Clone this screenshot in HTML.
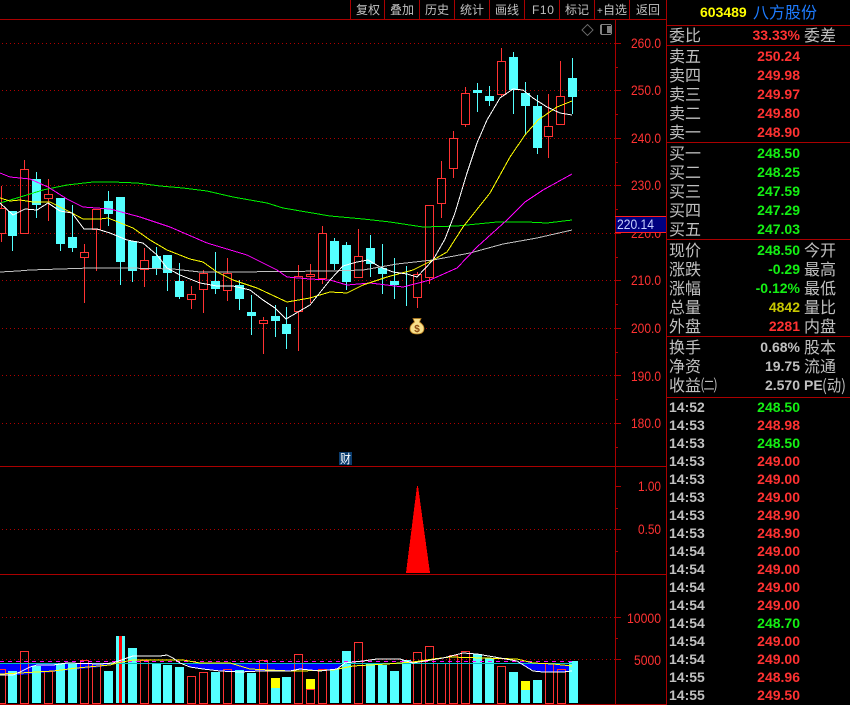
<!DOCTYPE html>
<html><head><meta charset="utf-8"><title>603489</title>
<style>
html,body{margin:0;padding:0;background:#000;width:850px;height:705px;overflow:hidden}
svg{display:block;position:absolute;left:0;top:0}
text{font-family:"Liberation Sans","WenQuanYi Zen Hei","Noto Sans CJK SC",sans-serif}
.c{font-family:"WenQuanYi Zen Hei","Noto Sans CJK SC",sans-serif;font-size:16px;fill:#c0c0c0}
.t{font-family:"WenQuanYi Zen Hei","Noto Sans CJK SC",sans-serif;font-size:12px;fill:#c0c0c0}
.n{font-weight:bold;font-size:14px;text-anchor:end}
.a{font-size:14px;fill:#ff3232}
.r{fill:#ff3232}.g{fill:#14f014}.w{fill:#c0c0c0}.y{fill:#c8c800}
.h{font-weight:bold;font-size:14px;fill:#c0c0c0}
</style></head><body>
<svg width="850" height="705" viewBox="0 0 850 705" xmlns="http://www.w3.org/2000/svg">
<rect width="850" height="705" fill="#000"/>
<g shape-rendering="crispEdges">
<!-- grid -->
<g stroke="#b00000" stroke-dasharray="1 3" fill="none">
<path d="M2 43.5H615M2 90.5H615M2 138.5H615M2 185.5H615M2 233.5H615M2 280.5H615M2 328.5H615M2 375.5H615M2 423.5H615M2 529.5H615M2 617.5H615M2 659.5H615"/>
</g>
<!-- frame -->
<g stroke="#aa0000" fill="none">
<path d="M0 19.5H666M0 466.5H666M0 574.5H666M0 704.5H666M615.5 19V705M666.5 0V705"/>
<path d="M350.5 0V19M384.5 0V19M419.5 0V19M454.5 0V19M489.5 0V19M524.5 0V19M559.5 0V19M594.5 0V19M629.5 0V19"/>
<path d="M666 25.5H850M666 45.5H850M666 142.5H850M666 239.5H850M666 336.5H850M666 397.5H850"/>
<path d="M615 43.5h6M615 90.5h6M615 138.5h6M615 185.5h6M615 233.5h6M615 280.5h6M615 328.5h6M615 375.5h6M615 423.5h6M615 67.5h3M615 114.5h3M615 162.5h3M615 209.5h3M615 257.5h3M615 304.5h3M615 352.5h3M615 399.5h3M615 447.5h3M615 486.5h6M615 529.5h6M615 508.5h3M615 551.5h3M615 617.5h6M615 659.5h6M615 638.5h3"/>
</g>
<!-- cyan candles -->
<path fill="#54ffff" d="M8 211h9v25H8zM32 179h9v26h-9zM56 198h9v46h-9zM68 237h9v11h-9zM104 201h9v13h-9zM116 197h9v65h-9zM128 241h9v30h-9zM152 256h9v13h-9zM163 255h9v18h-9zM175 281h9v16h-9zM211 281h9v8h-9zM235 285h9v14h-9zM247 312h9v4h-9zM271 316h9v5h-9zM282 324h9v10h-9zM330 241h9v23h-9zM342 245h9v37h-9zM366 248h9v16h-9zM378 268h9v6h-9zM390 281h9v4h-9zM473 90h9v3h-9zM485 96h9v5h-9zM509 57h9v33h-9zM521 93h9v13h-9zM533 106h9v42h-9zM568 78h9v19h-9z"/>
<path stroke="#54ffff" fill="none" d="M12.5 236V251M36.5 172V218M60.5 244V251M72.5 205V252M108.5 191V226M120.5 262V285M132.5 271V282M156.5 247V275M167.5 273V291M179.5 263V299M215.5 252V294M239.5 280V310M251.5 295V335M275.5 305V337M286.5 307V349M334.5 238V270M346.5 242V290M370.5 235V277M382.5 244V294M394.5 258V299M406.5 266V306M477.5 83V112M489.5 86V106M513.5 52V114M525.5 82V135M537.5 95V154M572.5 58V114"/>
<!-- red candles -->
<path stroke="#ff3232" fill="none" d="M-2.5 208.5h8v25h-8zM1.5 186V208M1.5 233V242M20.5 169.5h8v64h-8zM24.5 160V169M44.5 194.5h8v4h-8zM48.5 179V194M48.5 198V221M80.5 252.5h8v5h-8zM84.5 244V252M84.5 257V303M92.5 209.5h8v20h-8zM96.5 229V271M140.5 260.5h8v9h-8zM144.5 248V260M144.5 269V287M187.5 294.5h8v5h-8zM191.5 286V294M191.5 299V309M199.5 273.5h8v16h-8zM203.5 270V273M203.5 289V313M223.5 273.5h8v17h-8zM227.5 258V273M227.5 290V301M259.5 320.5h8v3h-8zM263.5 317V320M263.5 323V354M294.5 276.5h8v35h-8zM298.5 265V276M298.5 311V351M306.5 274.5h8v2h-8zM310.5 264V274M310.5 276V303M318.5 233.5h8v45h-8zM322.5 226V233M322.5 278V284M354.5 256.5h8v21h-8zM358.5 229V256M413.5 274.5h8v23h-8zM417.5 272V274M417.5 297V308M425.5 205.5h8v72h-8zM429.5 277V284M437.5 178.5h8v25h-8zM441.5 161V178M441.5 203V218M449.5 138.5h8v30h-8zM453.5 131V138M453.5 168V178M461.5 93.5h8v31h-8zM465.5 87V93M465.5 124V127M497.5 61.5h8v33h-8zM501.5 48V61M501.5 94V97M544.5 126.5h8v10h-8zM548.5 94V126M548.5 136V158M556.5 96.5h8v28h-8zM560.5 61V96"/>
<!-- MA lines -->
<g fill="none">
<polyline stroke="#c0c0c0" points="0,272 18,271 30,270 90,268 127,268 173,269 200,272 233,272 330,271 363,270 397,264 433,260 470,253 503,244 537,238 572,230"/>
<polyline stroke="#00f000" points="0,203 17,198 43,190 67,185 93,182 113,182 137,183 160,186 183,188 207,191 233,197 267,203 283,208 330,216 363,219 390,222 423,227 457,226 497,222 527,222 547,223 572,220"/>
<polyline stroke="#ff00ff" points="0,173 10,177 30,179 48,187 67,199 83,207 110,209 140,217 170,227 207,243 247,255 277,270 287,277 310,279 330,280 347,285 370,283 403,287 430,280 457,268 477,247 507,220 525,202 543,190 572,174"/>
<polyline stroke="#ffff00" points="0,198 10,201 20,200 33,202 50,202 70,212 83,219 100,219 108,218 133,228 150,240 167,250 190,259 203,262 217,272 233,280 257,288 287,302 310,298 330,292 347,293 363,285 387,277 413,270 433,260 447,252 463,227 490,193 510,157 525,135 538,120 557,107 572,101"/>
<polyline stroke="#ffffff" points="0,203 13,215 25,209 37,210 48,203 60,211 72,213 84,229 97,229 110,233 127,240 143,243 157,255 167,268 180,275 200,283 217,286 233,286 250,290 263,300 275,308 286,319 298,312 310,305 330,280 343,266 357,262 368,260 380,267 393,272 407,274 417,277 433,260 445,239 455,213 467,173 477,143 487,120 500,98 513,89 523,90 533,98 547,107 560,113 572,115"/>
</g>
<!-- MACD triangle -->
<polygon fill="#ff0000" points="417,486 418,486 430,573 406,573"/>
<!-- volume blue -->
<path fill="#0000ff" d="M0 663H115L110 665 100 667 53 672 20 675H0ZM185 663H342L337 670 300 670 260 671 240 672 203 669 190 667ZM517 662L572 665V670L563 672 543 672 533 670 522 665Z"/>
<!-- volume bars -->
<path fill="#54ffff" d="M8 671h9v32H8zM32 666h9v37h-9zM56 664h9v39h-9zM68 663h9v40h-9zM104 671h9v32h-9zM116 636h9v67h-9zM128 648h9v55h-9zM152 663h9v40h-9zM163 665h9v38h-9zM175 667h9v36h-9zM211 672h9v31h-9zM235 670h9v33h-9zM247 673h9v30h-9zM271 688h9v15h-9zM282 677h9v26h-9zM330 669h9v34h-9zM342 651h9v52h-9zM366 664h9v39h-9zM378 665h9v38h-9zM390 671h9v32h-9zM402 660h9v43h-9zM473 654h9v49h-9zM485 658h9v45h-9zM509 672h9v31h-9zM521 690h9v13h-9zM533 680h9v23h-9zM569 661h9v42h-9z"/>
<rect x="119" y="636" width="3" height="67" fill="#ff0000"/>
<path fill="#ffff00" d="M271 678h9v10h-9zM306 679h9v10h-9zM521 681h9v9h-9z"/>
<path stroke="#ff3232" fill="none" d="M-2.5 669.5h8v34h-8zM20.5 651.5h8v52h-8zM44.5 671.5h8v32h-8zM80.5 660.5h8v43h-8zM92.5 663.5h8v40h-8zM140.5 660.5h8v43h-8zM187.5 676.5h8v27h-8zM199.5 672.5h8v31h-8zM223.5 669.5h8v34h-8zM259.5 660.5h8v43h-8zM294.5 654.5h8v49h-8zM306.5 689.5h8v14h-8zM318.5 669.5h8v34h-8zM354.5 642.5h8v61h-8zM413.5 652.5h8v51h-8zM425.5 646.5h8v57h-8zM437.5 663.5h8v40h-8zM449.5 655.5h8v48h-8zM461.5 651.5h8v52h-8zM497.5 666.5h8v37h-8zM545.5 663.5h8v40h-8zM557.5 669.5h8v34h-8z"/>
<!-- volume lines -->
<g fill="none">
<path stroke="#ff00ff" stroke-dasharray="4 4" d="M0 661.5H572"/>
<path stroke="#00c0c0" d="M0 663.5H572"/>
<polyline stroke="#ffff00" points="0,674 20,673 53,671 77,668 110,665 117,663 133,660 183,660 200,663 230,663 250,669 290,671 300,671 333,670 353,666 387,664 413,662 433,659 450,657 483,658 517,659 533,663 553,664 572,666"/>
<polyline stroke="#ffffff" points="0,675 13,675 20,672 30,667 37,665 53,665 67,663 100,664 113,663 127,658 133,656 160,656 167,655 173,658 180,663 190,667 203,669 220,671 240,672 260,671 290,671 300,669 320,671 337,669 345,663 363,661 377,659 400,659 413,663 443,658 463,653 477,654 500,658 517,661 533,671 543,672 563,672 572,671"/>
</g>
<!-- price tag -->
<rect x="616" y="217" width="50" height="15" fill="#000080"/>
<path stroke="#ff2020" d="M615 216.5H666M615 232.5H666"/>
<!-- cai icon -->
<rect x="339" y="452" width="13" height="13" fill="#0a3c6e"/>
<!-- top-right icons -->
<path d="M587.500 24.500l5.500 5.500-5.500 5.500-5.500-5.500z" fill="none" stroke="#606060"/>
<rect x="600.500" y="24.500" width="11" height="10" rx="1.500" fill="none" stroke="#808080"/>
<rect x="601" y="25" width="1" height="9" fill="#808080"/>
<rect x="607" y="26" width="4" height="7" fill="#808080"/>
</g>
<text class="t" x="340" y="463" style="fill:#fff;font-size:12px" textLength="11" lengthAdjust="spacingAndGlyphs">财</text>
<!-- money bag -->
<path d="M413 318.500h8l-1.500 3.500c3 2 4.500 4.500 4.500 6.500 0 3.500-2.500 5.500-7 5.500s-7-2-7-5.500c0-2 1.500-4.500 4.500-6.500z" fill="#f8e08a" stroke="#b87c1c" stroke-width=".8"/>
<text x="417" y="332" font-size="10" font-weight="bold" fill="#8a4a10" text-anchor="middle">$</text>
<!-- toolbar -->
<text class="t" x="356" y="14">复权</text>
<text class="t" x="390" y="14">叠加</text>
<text class="t" x="425" y="14">历史</text>
<text class="t" x="460" y="14">统计</text>
<text class="t" x="495" y="14">画线</text>
<text x="532" y="14" font-size="12" fill="#c0c0c0" letter-spacing=".6">F10</text>
<text class="t" x="565" y="14">标记</text>
<text x="597" y="14" font-size="10" fill="#c0c0c0">+</text>
<text class="t" x="603" y="14">自选</text>
<text class="t" x="636" y="14">返回</text>
<!-- axis labels -->
<text class="a" x="631" y="48" textLength="30" lengthAdjust="spacingAndGlyphs">260.0</text>
<text class="a" x="631" y="95" textLength="30" lengthAdjust="spacingAndGlyphs">250.0</text>
<text class="a" x="631" y="143" textLength="30" lengthAdjust="spacingAndGlyphs">240.0</text>
<text class="a" x="631" y="190" textLength="30" lengthAdjust="spacingAndGlyphs">230.0</text>
<text class="a" x="631" y="285" textLength="30" lengthAdjust="spacingAndGlyphs">210.0</text>
<text class="a" x="631" y="333" textLength="30" lengthAdjust="spacingAndGlyphs">200.0</text>
<text class="a" x="631" y="381" textLength="30" lengthAdjust="spacingAndGlyphs">190.0</text>
<text class="a" x="631" y="428" textLength="30" lengthAdjust="spacingAndGlyphs">180.0</text>
<clipPath id="cl"><rect x="615" y="233" width="51" height="10"/></clipPath>
<text class="a" x="631" y="238" textLength="30" lengthAdjust="spacingAndGlyphs" clip-path="url(#cl)">220.0</text>
<text x="617" y="229" font-size="14" fill="#c8d0ff" textLength="37" lengthAdjust="spacingAndGlyphs">220.14</text>
<text class="a" x="638" y="491" textLength="23" lengthAdjust="spacingAndGlyphs">1.00</text>
<text class="a" x="638" y="534" textLength="23" lengthAdjust="spacingAndGlyphs">0.50</text>
<text class="a" x="627" y="623" textLength="34" lengthAdjust="spacingAndGlyphs">10000</text>
<text class="a" x="634" y="665" textLength="27" lengthAdjust="spacingAndGlyphs">5000</text>
<!-- sidebar header -->
<text x="700" y="17" font-size="14" font-weight="bold" fill="#ffff00">603489</text>
<text class="c" x="753" y="18" style="fill:#1e7cff">八方股份</text>
<!-- sidebar labels -->
<text class="c" x="669" y="41">委比</text><text class="c" x="804" y="41">委差</text>
<text class="c" x="669" y="62">卖五</text>
<text class="c" x="669" y="81">卖四</text>
<text class="c" x="669" y="100">卖三</text>
<text class="c" x="669" y="119">卖二</text>
<text class="c" x="669" y="138">卖一</text>
<text class="c" x="669" y="159">买一</text>
<text class="c" x="669" y="178">买二</text>
<text class="c" x="669" y="197">买三</text>
<text class="c" x="669" y="216">买四</text>
<text class="c" x="669" y="235">买五</text>
<text class="c" x="669" y="256">现价</text><text class="c" x="804" y="256">今开</text>
<text class="c" x="669" y="275">涨跌</text><text class="c" x="804" y="275">最高</text>
<text class="c" x="669" y="294">涨幅</text><text class="c" x="804" y="294">最低</text>
<text class="c" x="669" y="313">总量</text><text class="c" x="804" y="313">量比</text>
<text class="c" x="669" y="332">外盘</text><text class="c" x="804" y="332">内盘</text>
<text class="c" x="669" y="353">换手</text><text class="c" x="804" y="353">股本</text>
<text class="c" x="669" y="372">净资</text><text class="c" x="804" y="372">流通</text>
<text class="c" x="669" y="391">收益㈡</text>
<text x="804" y="390" font-size="14" font-weight="bold" fill="#c0c0c0">PE</text>
<text class="c" x="822" y="391" textLength="24" lengthAdjust="spacingAndGlyphs">(动)</text>
<!-- sidebar numbers -->
<text class="n r" x="800" y="40">33.33%</text>
<text class="n r" x="800" y="61">250.24</text>
<text class="n r" x="800" y="80">249.98</text>
<text class="n r" x="800" y="99">249.97</text>
<text class="n r" x="800" y="118">249.80</text>
<text class="n r" x="800" y="137">248.90</text>
<text class="n g" x="800" y="158">248.50</text>
<text class="n g" x="800" y="177">248.25</text>
<text class="n g" x="800" y="196">247.59</text>
<text class="n g" x="800" y="215">247.29</text>
<text class="n g" x="800" y="234">247.03</text>
<text class="n g" x="800" y="255">248.50</text>
<text class="n g" x="800" y="274">-0.29</text>
<text class="n g" x="800" y="293">-0.12%</text>
<text class="n y" x="800" y="312">4842</text>
<text class="n r" x="800" y="331">2281</text>
<text class="n w" x="800" y="352">0.68%</text>
<text class="n w" x="800" y="371">19.75</text>
<text class="n w" x="800" y="390">2.570</text>
<!-- trades -->
<text class="h" x="669" y="412">14:52</text><text class="n g" x="800" y="412">248.50</text>
<text class="h" x="669" y="430">14:53</text><text class="n r" x="800" y="430">248.98</text>
<text class="h" x="669" y="448">14:53</text><text class="n g" x="800" y="448">248.50</text>
<text class="h" x="669" y="466">14:53</text><text class="n r" x="800" y="466">249.00</text>
<text class="h" x="669" y="484">14:53</text><text class="n r" x="800" y="484">249.00</text>
<text class="h" x="669" y="502">14:53</text><text class="n r" x="800" y="502">249.00</text>
<text class="h" x="669" y="520">14:53</text><text class="n r" x="800" y="520">248.90</text>
<text class="h" x="669" y="538">14:53</text><text class="n r" x="800" y="538">248.90</text>
<text class="h" x="669" y="556">14:54</text><text class="n r" x="800" y="556">249.00</text>
<text class="h" x="669" y="574">14:54</text><text class="n r" x="800" y="574">249.00</text>
<text class="h" x="669" y="592">14:54</text><text class="n r" x="800" y="592">249.00</text>
<text class="h" x="669" y="610">14:54</text><text class="n r" x="800" y="610">249.00</text>
<text class="h" x="669" y="628">14:54</text><text class="n g" x="800" y="628">248.70</text>
<text class="h" x="669" y="646">14:54</text><text class="n r" x="800" y="646">249.00</text>
<text class="h" x="669" y="664">14:54</text><text class="n r" x="800" y="664">249.00</text>
<text class="h" x="669" y="682">14:55</text><text class="n r" x="800" y="682">248.96</text>
<text class="h" x="669" y="700">14:55</text><text class="n r" x="800" y="700">249.50</text>
</svg>
</body></html>
